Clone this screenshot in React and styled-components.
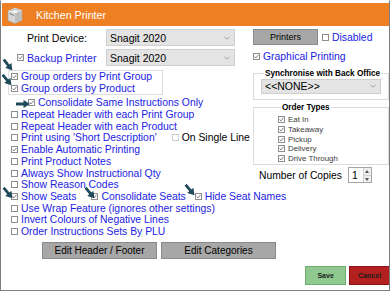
import React from 'react';
import styled, { createGlobalStyle } from 'styled-components';

const BLUE = '#2222e4';

const GlobalStyle = createGlobalStyle`
  html, body {
    margin: 0;
    padding: 0;
    background: #fff;
  }
  body {
    font-family: "Liberation Sans", Arial, sans-serif;
  }
`;

const Window = styled.div`
  position: relative;
  width: 390px;
  height: 291px;
  box-sizing: border-box;
  border: 1px solid #7d7d7d;
  border-top-color: #fff;
  background: #fff;
  overflow: hidden;
`;

const Header = styled.div`
  display: flex;
  align-items: center;
  height: 23px;
  margin: 2px 0 0 1px;
  padding-left: 4px;
  gap: 13px;
  background: #ee7f22;
  color: #fff;
  font-size: 10.7px;
`;

const Body = styled.div`
  display: grid;
  grid-template-columns: 245px 1fr;
  padding: 0 5px 0 7px;
`;

const Column = styled.div`
  display: flex;
  flex-direction: column;
`;

const DeviceRow = styled.div`
  display: grid;
  grid-template-columns: 98px 129px;
  align-items: center;
  height: 17px;
  margin-top: 3px;
`;

const FieldLabel = styled.div`
  display: flex;
  align-items: center;
  gap: 3px;
  padding-left: ${p => (p.$check ? 9 : 19)}px;
  font-size: 10.6px;
  color: ${p => (p.$blue ? BLUE : '#000')};
  white-space: nowrap;
`;

const Select = styled.div`
  display: flex;
  align-items: center;
  justify-content: space-between;
  box-sizing: border-box;
  height: ${p => p.$h || 17}px;
  padding: 0 4px 0 3px;
  background: #e4e4e4;
  border: 1px solid #cfcfcf;
  font-size: 10.5px;
  color: #000;
`;

const GroupBox = styled.div`
  width: 155px;
  margin-top: 4px;
  padding-left: 2px;
  box-sizing: border-box;
  border: 1px solid #dedede;
`;

const Option = styled.div`
  display: flex;
  align-items: center;
  gap: 3px;
  height: 11.7px;
  padding-left: ${p => p.$indent ?? 3}px;
  margin-top: ${p => p.$top || 0}px;
  font-size: 10.4px;
  color: ${BLUE};
  white-space: nowrap;
`;

const Plain = styled.span`
  color: #000;
`;

const Box = styled.span`
  display: inline-flex;
  align-items: center;
  justify-content: center;
  flex: none;
  width: 7px;
  height: 7px;
  box-sizing: border-box;
  margin-left: ${p => p.$lead || 0}px;
  background: #fff;
  border: 1px solid ${p => (p.$muted ? '#d0d0d0' : '#8e8e8e')};
`;

const Check = ({ checked, muted, lead }) => (
  <Box $muted={muted} $lead={lead}>
    {checked && (
      <svg width="5" height="5" viewBox="0 0 5 5">
        <path d="M0.6 2.5 L2 3.9 L4.5 0.8" fill="none" stroke="#6e6e6e" strokeWidth="0.9" />
      </svg>
    )}
  </Box>
);

const Chevron = () => (
  <svg width="6" height="4" viewBox="0 0 6 4">
    <path d="M0.5 0.8 L3 3.2 L5.5 0.8" fill="none" stroke="#9a9a9a" strokeWidth="0.9" />
  </svg>
);

const PrinterRow = styled.div`
  display: flex;
  align-items: center;
  gap: 3px;
  height: 16px;
  margin-top: 3px;
  font-size: 10.4px;
  color: ${BLUE};
`;

const GreyButton = styled.div`
  display: flex;
  align-items: center;
  justify-content: center;
  flex: none;
  box-sizing: border-box;
  width: ${p => p.$w}px;
  height: ${p => p.$h}px;
  margin-right: ${p => p.$after || 0}px;
  background: #a7a7a7;
  border: 1px solid #8a8a8a;
  font-size: ${p => p.$fs}px;
  color: #000;
`;

const Group = styled.fieldset`
  margin: ${p => p.$top}px 1px 0 0;
  padding: ${p => p.$pad};
  border: 1px solid #dcdcdc;
  min-width: 0;
`;

const Legend = styled.legend`
  margin-left: 3px;
  padding: 0 1px;
  font-size: 8.2px;
  line-height: 10px;
  font-weight: bold;
  color: #000;
  white-space: nowrap;
`;

const TypeItem = styled.div`
  display: flex;
  align-items: center;
  gap: 3px;
  height: 9.75px;
  font-size: 7.9px;
  color: #3c3c3c;
`;

const CopiesRow = styled.div`
  display: flex;
  align-items: center;
  gap: 6px;
  height: 16px;
  margin-top: 2px;
  padding-left: 6px;
  font-size: 10.3px;
  color: #000;
`;

const Spinner = styled.div`
  display: flex;
  box-sizing: border-box;
  width: 24px;
  height: 16px;
  border: 1px solid #a5a5a5;
  background: #fff;
  font-size: 10.4px;
`;

const SpinValue = styled.div`
  flex: 1;
  display: flex;
  align-items: center;
  padding-left: 3px;
`;

const SpinButtons = styled.div`
  display: flex;
  flex-direction: column;
  width: 7px;
  border-left: 1px solid #d0d0d0;
`;

const SpinButton = styled.div`
  flex: 1;
  display: flex;
  align-items: center;
  justify-content: center;
  background: #efefef;
  & + & {
    border-top: 1px solid #d0d0d0;
  }
`;

const EditRow = styled.div`
  grid-column: 1 / -1;
  display: flex;
  gap: 4px;
  margin-top: 4.5px;
  padding-left: 34px;
`;

const ActionRow = styled.div`
  grid-column: 1 / -1;
  display: flex;
  justify-content: flex-end;
  gap: 3px;
  margin-top: 7px;
`;

const ActionButton = styled.div`
  display: flex;
  align-items: center;
  justify-content: center;
  box-sizing: border-box;
  width: 41px;
  height: 19px;
  font-size: 7px;
  font-weight: bold;
  color: #1c1c1c;
  background: ${p => (p.$tone === 'red' ? '#b42020' : '#8fc98f')};
  border: 1px solid ${p => (p.$tone === 'red' ? '#8c1616' : '#6fae6f')};
`;

const ArrowSvg = styled.svg`
  position: absolute;
  left: ${p => p.$x - 7}px;
  top: ${p => p.$y - 4}px;
  transform: rotate(${p => p.$angle}deg);
`;

const Arrow = ({ x, y, angle }) => (
  <ArrowSvg $x={x} $y={y} $angle={angle} width="14" height="8" viewBox="0 0 14 8">
    <path d="M0 2.6 L7.5 2.6 L7.5 0 L14 4 L7.5 8 L7.5 5.4 L0 5.4 Z" fill="#1e4a5a" />
  </ArrowSvg>
);

const PrinterIcon = () => (
  <svg width="17" height="20" viewBox="0 0 17 20">
    <path d="M2 6 L9 3 L16 5.5 L16 15 L9 18.5 L2 15.5 Z" fill="#d6d6d6" stroke="#a3a3a3" strokeWidth="0.6" />
    <path d="M2 6 L9 3 L16 5.5 L9 8.5 Z" fill="#f0f0f0" />
    <path d="M9 8.5 L16 5.5 L16 15 L9 18.5 Z" fill="#bdbdbd" />
    <path d="M3.5 8.5 L8 10.4" stroke="#7b7b7b" strokeWidth="1" />
    <path d="M4 6 L9 4.2 L13.5 5.6" stroke="#9a9a9a" strokeWidth="0.7" fill="none" />
  </svg>
);

const Tri = ({ up }) => (
  <svg width="4" height="3" viewBox="0 0 4 3">
    <path d={up ? 'M0 3 L2 0 L4 3 Z' : 'M0 0 L2 3 L4 0 Z'} fill="#555" />
  </svg>
);

const listOptions = [
  { label: 'Repeat Header with each Print Group' },
  { label: 'Repeat Header with each Product' },
];

const lowerOptions = [
  { label: 'Always Show Instructional Qty' },
  { label: 'Show Reason Codes' },
];

const orderTypes = ['Eat In', 'Takeaway', 'Pickup', 'Delivery', 'Drive Through'];

export default function App() {
  return (
    <>
      <GlobalStyle />
      <Window>
        <Header>
          <PrinterIcon />
          <span>Kitchen Printer</span>
        </Header>
        <Body>
          <Column>
            <DeviceRow>
              <FieldLabel>Print Device:</FieldLabel>
              <Select>
                Snagit 2020
                <Chevron />
              </Select>
            </DeviceRow>
            <DeviceRow>
              <FieldLabel $check $blue>
                <Check checked />
                Backup Printer
              </FieldLabel>
              <Select>
                Snagit 2020
                <Chevron />
              </Select>
            </DeviceRow>
            <GroupBox>
              <Option $indent={0}>
                <Check checked />
                Group orders by Print Group
              </Option>
              <Option $indent={0}>
                <Check checked />
                Group orders by Product
              </Option>
            </GroupBox>
            <Option $indent={20} $top={1.7}>
              <Check checked />
              Consolidate Same Instructions Only
            </Option>
            {listOptions.map(o => (
              <Option key={o.label}>
                <Check />
                {o.label}
              </Option>
            ))}
            <Option>
              <Check />
              Print using 'Short Description'
              <Check muted lead={12} />
              <Plain>On Single Line</Plain>
            </Option>
            <Option>
              <Check checked />
              Enable Automatic Printing
            </Option>
            <Option>
              <Check />
              Print Product Notes
            </Option>
            {lowerOptions.map(o => (
              <Option key={o.label}>
                <Check />
                {o.label}
              </Option>
            ))}
            <Option>
              <Check checked />
              Show Seats
              <Check checked lead={12} />
              Consolidate Seats
              <Check checked lead={6} />
              Hide Seat Names
            </Option>
            <Option>
              <Check />
              Use Wrap Feature (ignores other settings)
            </Option>
            <Option>
              <Check />
              Invert Colours of Negative Lines
            </Option>
            <Option>
              <Check />
              Order Instructions Sets By PLU
            </Option>
          </Column>

          <Column>
            <PrinterRow>
              <GreyButton $w={65} $h={16} $fs={9} $after={1}>
                Printers
              </GreyButton>
              <Check />
              Disabled
            </PrinterRow>
            <Option $indent={0} $top={6}>
              <Check checked />
              Graphical Printing
            </Option>
            <Group $top={6} $pad="0 7px 5px 7px">
              <Legend>Synchronise with Back Office</Legend>
              <Select $h={15}>
                {'<<NONE>>'}
                <Chevron />
              </Select>
            </Group>
            <Group $top={3} $pad="2px 4px 1px 24px">
              <Legend>Order Types</Legend>
              {orderTypes.map(t => (
                <TypeItem key={t}>
                  <Check checked />
                  {t}
                </TypeItem>
              ))}
            </Group>
            <CopiesRow>
              Number of Copies
              <Spinner>
                <SpinValue>1</SpinValue>
                <SpinButtons>
                  <SpinButton>
                    <Tri up />
                  </SpinButton>
                  <SpinButton>
                    <Tri />
                  </SpinButton>
                </SpinButtons>
              </Spinner>
            </CopiesRow>
          </Column>

          <EditRow>
            <GreyButton $w={115} $h={17} $fs={10}>
              Edit Header / Footer
            </GreyButton>
            <GreyButton $w={115} $h={17} $fs={10}>
              Edit Categories
            </GreyButton>
          </EditRow>
          <ActionRow>
            <ActionButton>Save</ActionButton>
            <ActionButton $tone="red">Cancel</ActionButton>
          </ActionRow>
        </Body>

        <Arrow x={6.5} y={64} angle={52} />
        <Arrow x={6} y={79} angle={50} />
        <Arrow x={22} y={103} angle={0} />
        <Arrow x={6.5} y={191.5} angle={50} />
        <Arrow x={88.5} y={192} angle={50} />
        <Arrow x={188.5} y={188.5} angle={50} />
      </Window>
    </>
  );
}
